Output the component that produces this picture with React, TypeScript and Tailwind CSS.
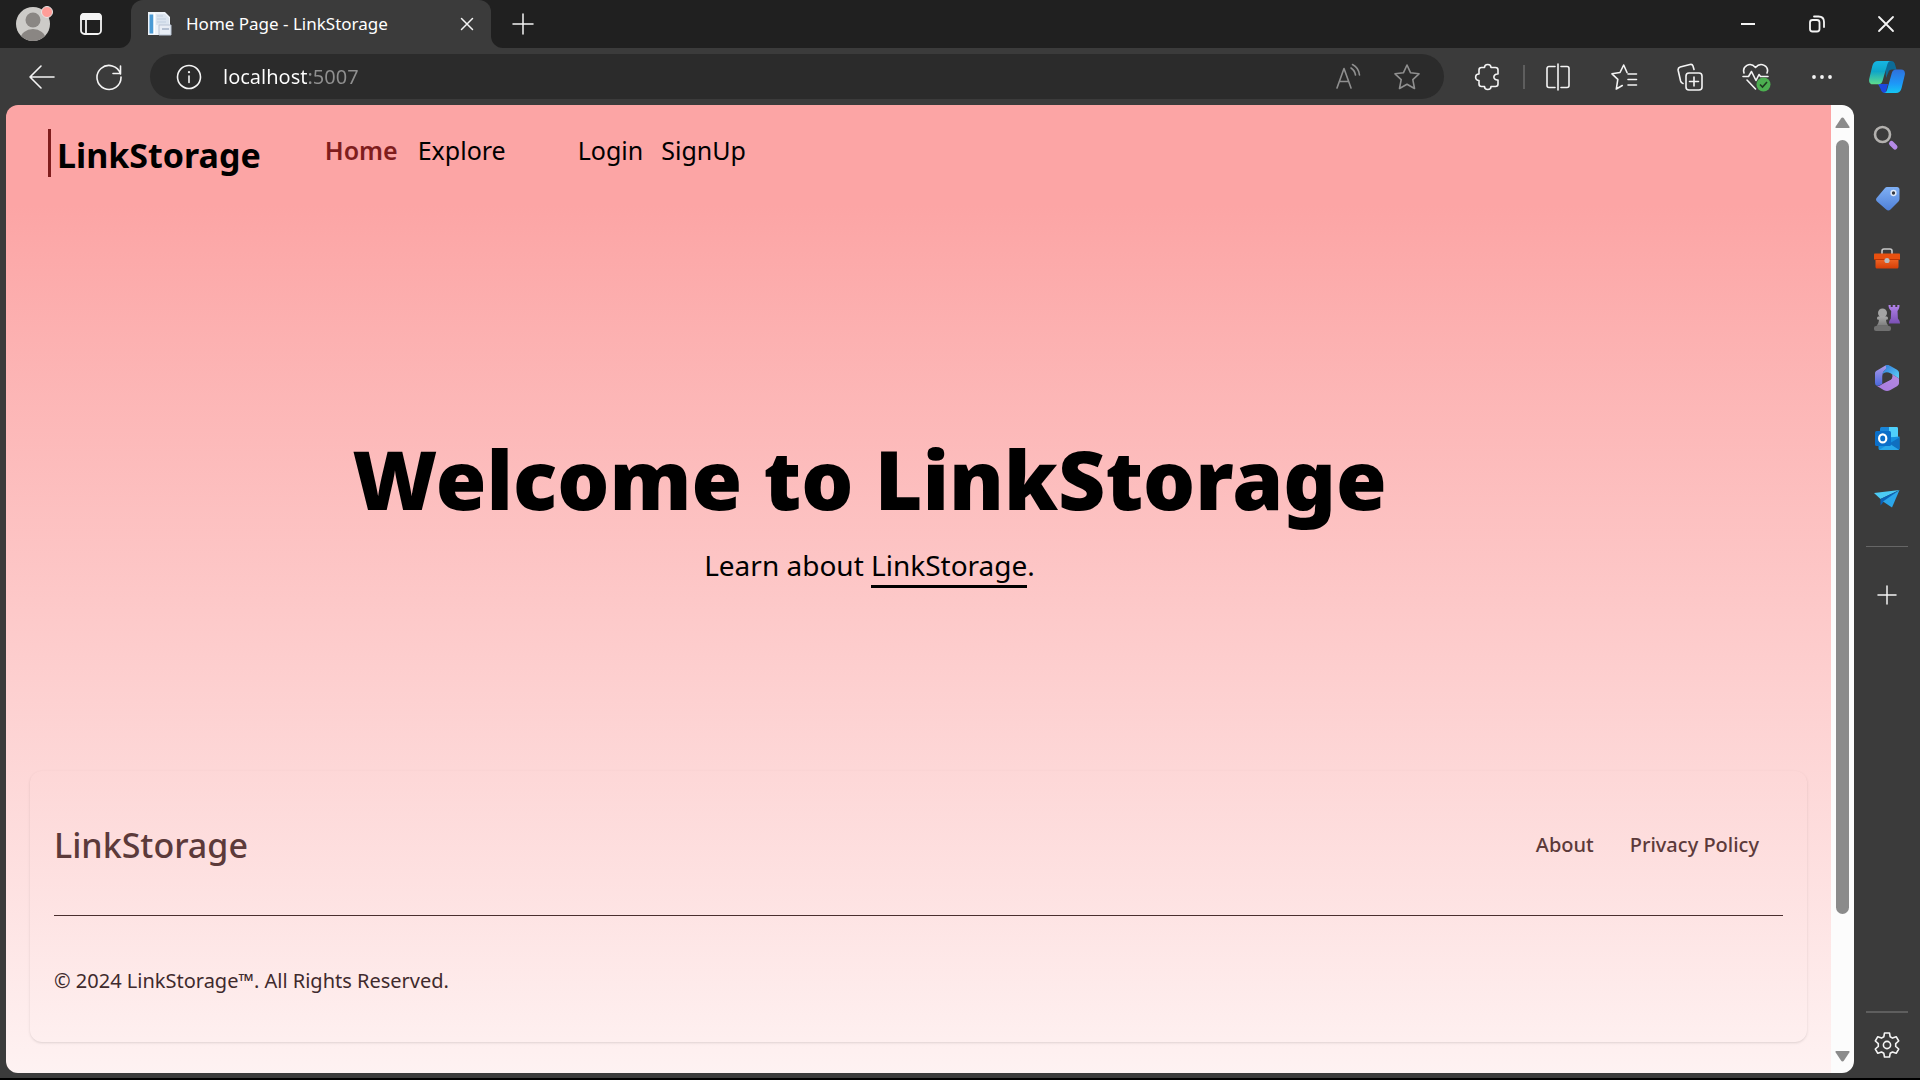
import { useState } from 'react'
import type { ReactNode } from 'react'

interface IconButtonProps {
  label: string
  className?: string
  children: ReactNode
}

function IconButton({ label, className = '', children }: IconButtonProps) {
  return (
    <button type="button" aria-label={label} className={`flex shrink-0 items-center justify-center ${className}`}>
      {children}
    </button>
  )
}

interface LineIconProps {
  size?: number
  stroke?: string
  width?: number
  children: ReactNode
}

function LineIcon({ size = 28, stroke = '#f4f4f4', width = 1.6, children }: LineIconProps) {
  return (
    <svg
      width={size}
      height={size}
      viewBox={`0 0 ${size} ${size}`}
      fill="none"
      stroke={stroke}
      strokeWidth={width}
      strokeLinecap="round"
      strokeLinejoin="round"
      aria-hidden="true"
    >
      {children}
    </svg>
  )
}

function Avatar() {
  return (
    <svg width="40" height="40" viewBox="0 0 40 40" aria-hidden="true">
      <defs>
        <clipPath id="avatar">
          <circle cx="19" cy="20" r="17" />
        </clipPath>
      </defs>
      <g clipPath="url(#avatar)">
        <rect width="40" height="40" fill="#cdcbc8" />
        <circle cx="19" cy="16" r="7.5" fill="#8a8683" />
        <ellipse cx="19" cy="35" rx="12.5" ry="10" fill="#8a8683" />
      </g>
      <circle cx="33" cy="8" r="5.5" fill="#ff9d98" stroke="#e6e6e6" />
    </svg>
  )
}

function Favicon() {
  return (
    <svg width="26" height="26" viewBox="0 0 26 26" aria-hidden="true">
      <path d="M1 1h17l5 5v18H1z" fill="#eef3f9" />
      <path d="M2.5 3.5h4v19h-4z" fill="#4a9ad4" />
      <path d="M6.5 2H8v21H6.500z" fill="#fff" />
      <path d="M9 3h9l4 4v7H9z" fill="#dbe4ef" />
      <path d="M10 5h6M10 8h9M10 11h9" stroke="#c1cfe0" />
      <path d="M12 14h12v10H12z" fill="#e8edf5" stroke="#b9c4d4" />
      <path d="M15 18h7" stroke="#a3b1c6" strokeWidth="1.5" />
    </svg>
  )
}

function CopilotLogo() {
  return (
    <svg width="36" height="32" viewBox="0 0 36 32" aria-hidden="true">
      <defs>
        <linearGradient id="cpLeft" x1="0" y1="0" x2="0" y2="1">
          <stop offset="0" stopColor="#16b6e4" />
          <stop offset="0.45" stopColor="#0fa6c8" />
          <stop offset="1" stopColor="#5fdc8c" />
        </linearGradient>
        <linearGradient id="cpRight" x1="0" y1="0" x2="0" y2="1">
          <stop offset="0" stopColor="#2f70dc" />
          <stop offset="0.6" stopColor="#1d98f8" />
          <stop offset="1" stopColor="#14c6f2" />
        </linearGradient>
      </defs>
      <path d="M16 0h6c2.500 0 3.600 1.500 4.200 4l1.300 4.500H23c-2 0-3 .8-3.700 3L17 17z" fill="#0c6c98" />
      <path d="M9 23h10l-1.500 5.500C17 30.500 17.500 31.500 19 32h-3c-2.500 0-3.600-1.500-4.400-4z" fill="#1c48dc" />
      <path d="M9 0h13c-2 0-3 1-3.700 3.500L13.500 20c-.7 2.200-2 3.300-4 3.300H4C.8 23.300-.5 21 .3 17.500L3.300 5C4.200 1.500 6 0 9 0z" fill="url(#cpLeft)" />
      <path d="M27 32H14.500c2 0 3-1 3.700-3.500L22.800 12c.7-2.300 2-3.500 4-3.500H32c3.200 0 4.500 2.300 3.700 5.800L32.600 27c-.9 3.500-2.600 5-5.600 5z" fill="url(#cpRight)" />
    </svg>
  )
}

const toolbarItems = [
  {
    label: 'Split screen',
    icon: (
      <LineIcon>
        <path d="M14 1v26M11 3.500H5A2 2 0 0 0 3 5.500v17a2 2 0 0 0 2 2h6M17 3.500h6a2 2 0 0 1 2 2v17a2 2 0 0 1-2 2h-6" />
      </LineIcon>
    ),
  },
  {
    label: 'Favorites',
    icon: (
      <LineIcon>
        <path d="M17 9.500 13.700 2 10 9.500l-8 1.300 5.800 5.500-1.500 9.700 6-3.500M18 11h8.500M18 16.500h8.500M18 22h8.500" />
      </LineIcon>
    ),
  },
  {
    label: 'Collections',
    icon: (
      <LineIcon>
        <rect x="10" y="10" width="16" height="17" rx="3" />
        <path d="M18 14v9M13.500 18.500h9M7 20.500c-1.500-.3-2-1-2.400-2.500L2.200 7.500c-.4-2 .2-3 2-3.500L14 1.500c1.500-.4 2.500 0 3 1.500l1 3.500" />
      </LineIcon>
    ),
  },
  {
    label: 'Browser essentials',
    icon: (
      <svg width="30" height="30" viewBox="0 0 30 30" fill="none" aria-hidden="true">
        <path
          d="M3 11C1 4.500 9-1 14.500 5.500 20-1 28.500 4.500 26 11M2 14.500h5.500l3-5 4.500 9 3-6 1.500 2H27M6 18l8.500 9"
          stroke="#f4f4f4"
          strokeWidth="1.6"
          strokeLinecap="round"
          strokeLinejoin="round"
        />
        <circle cx="22.5" cy="22.5" r="7" fill="#4caf50" />
        <path d="m19 22.500 2.500 2.500 4.500-5" stroke="#1f3a20" strokeWidth="1.6" />
      </svg>
    ),
  },
  {
    label: 'Settings and more',
    icon: (
      <svg width="22" height="6" viewBox="0 0 22 6" fill="#f4f4f4" aria-hidden="true">
        <circle cx="3" cy="3" r="1.9" />
        <circle cx="11" cy="3" r="1.9" />
        <circle cx="19" cy="3" r="1.9" />
      </svg>
    ),
  },
]

const sidebarItems = [
  {
    label: 'Search',
    icon: (
      <svg width="28" height="28" viewBox="0 0 28 28" fill="none" aria-hidden="true">
        <circle cx="9.5" cy="10.5" r="7.5" stroke="#b3b1ae" strokeWidth="2.6" />
        <path d="m18.500 19.500 3.500 3.500" stroke="#b48ae6" strokeWidth="5" strokeLinecap="round" />
      </svg>
    ),
  },
  {
    label: 'Shopping',
    icon: (
      <svg width="28" height="28" viewBox="0 0 28 28" aria-hidden="true">
        <defs>
          <linearGradient id="tag" x1="0" y1="0" x2="0" y2="1">
            <stop offset="0" stopColor="#7fb0f5" />
            <stop offset="1" stopColor="#4f80d8" />
          </linearGradient>
        </defs>
        <path d="M14 3h10c1.500 0 2.500 1 2.500 2.500V15c0 1-.3 1.800-1 2.500l-8 8c-1.300 1.300-3 1.300-4.300 0L4 17.500c-1.300-1.300-1.300-2.500 0-4l8-9.500c.6-.7 1.200-1 2-1z" fill="url(#tag)" />
        <circle cx="20.5" cy="9" r="2.4" fill="#35383f" stroke="#dfe9f8" strokeWidth="1.5" />
      </svg>
    ),
  },
  {
    label: 'Tools',
    icon: (
      <svg width="28" height="28" viewBox="0 0 28 28" aria-hidden="true">
        <defs>
          <linearGradient id="box" x1="0" y1="0" x2="0" y2="1">
            <stop offset="0" stopColor="#f26a2a" />
            <stop offset="1" stopColor="#d63e06" />
          </linearGradient>
        </defs>
        <path d="M9 10V7c0-1.200.8-2 2-2h6c1.200 0 2 .8 2 2v3" fill="none" stroke="#c9c9c9" strokeWidth="1.6" />
        <path d="M2.500 14h23v9c0 .8-.6 1.500-1.500 1.500H4c-.9 0-1.500-.7-1.500-1.500z" fill="url(#box)" />
        <path d="M2 9.500h24c.6 0 1 .4 1 1V15H1v-4.500c0-.6.4-1 1-1z" fill="#e8500f" />
        <path d="M1 15.500h26" stroke="#b93404" />
        <circle cx="14" cy="16.5" r="2.6" fill="#b9bcc0" />
      </svg>
    ),
  },
  {
    label: 'Games',
    icon: (
      <svg width="28" height="28" viewBox="0 0 28 28" aria-hidden="true">
        <defs>
          <linearGradient id="pawn" x1="0" y1="0" x2="0" y2="1">
            <stop offset="0" stopColor="#a9a9a9" />
            <stop offset="1" stopColor="#7c7c7c" />
          </linearGradient>
          <linearGradient id="rook" x1="0" y1="0" x2="0" y2="1">
            <stop offset="0" stopColor="#b283ea" />
            <stop offset="1" stopColor="#7a50b4" />
          </linearGradient>
        </defs>
        <path d="M15.500 1h2.200v2h2V1h2.600v2h2V1h2.200c0 3-.7 4.500-2 6l.4 7.500c1.300 1.500 2 3 2.100 5H16c0-2 .6-3.500 1.800-5l.4-7.500c-1.700-1.500-2.700-3-2.700-6z" fill="url(#rook)" />
        <circle cx="9.5" cy="9" r="4.5" fill="#a4a4a4" />
        <path d="M4 14.200c0-1 .7-1.700 1.700-1.700h7.600c1 0 1.700.7 1.700 1.700s-.7 1.600-1.700 1.600H13c.3 2.500 1 4.500 2.500 6h-12C5 20.300 5.700 18.300 6 15.800h-.3C4.700 15.800 4 15.200 4 14.200z" fill="url(#pawn)" />
        <rect x="1" y="22" width="17" height="5" rx="2" fill="#707070" />
      </svg>
    ),
  },
  {
    label: 'Microsoft 365',
    icon: (
      <svg width="28" height="28" viewBox="0 0 28 28" aria-hidden="true">
        <defs>
          <linearGradient id="m365a" x1="0" y1="0" x2="0" y2="1">
            <stop offset="0" stopColor="#b09ae8" />
            <stop offset="1" stopColor="#4a68dc" />
          </linearGradient>
          <linearGradient id="m365b" x1="0" y1="0" x2="1" y2="1">
            <stop offset="0" stopColor="#2f78d8" />
            <stop offset="1" stopColor="#5cd0f8" />
          </linearGradient>
          <linearGradient id="m365c" x1="0" y1="1" x2="1" y2="0">
            <stop offset="0" stopColor="#a77ae0" />
            <stop offset="1" stopColor="#b48ae0" />
          </linearGradient>
        </defs>
        <path d="M12 1.800 4 6.500C2.700 7.200 2 8.200 2 9.500v9c0 2 .8 3.300 2.300 3.300s3-.8 5.200-2.300V11c0-2 .6-3.500 2-4.600l4-3.200V1C14.300.7 13 1.100 12 1.800z" fill="url(#m365a)" />
        <path d="M12.500 1.500c1.500-.8 3-.6 4.500.2l7 4c1.300.8 2 1.800 2 3.300v5.500L17.500 9.300C15 8 13 8 11 9c-.8.500-1.200 1-1.500 2 0-2 .6-3.500 2-4.600 2-1.400 2-3.400 1-4.900z" fill="url(#m365b)" />
        <path d="M26 14.500V19c0 1.400-.7 2.400-2 3.200l-7 4c-2 1.100-4 1.100-6 0L4 22c2 .3 3.500-.7 5.500-2l7.500-4c1.500-1 2.500-2.200 2.500-3.700 0-1-.3-1.600-.8-2.200z" fill="url(#m365c)" />
        <path d="M9.500 12.500c0-2.500 3-4.500 6-3s4.500 4 2.500 6l-8.500 4z" fill="#3b3b3b" />
      </svg>
    ),
  },
  {
    label: 'Outlook',
    icon: (
      <svg width="28" height="28" viewBox="0 0 28 28" aria-hidden="true">
        <rect x="7" y="3" width="18" height="18" rx="1.5" fill="#1a86d9" />
        <path d="M16 3h7.500c.8 0 1.500.7 1.500 1.500v9h-9z" fill="#4fd0fb" />
        <path d="M5.500 13.500h11l10-1v12c0 .9-.6 1.500-1.500 1.500H7c-.9 0-1.500-.6-1.500-1.500z" fill="#1490df" />
        <path d="m26.500 13.500-11 6.500L26 25.500c.4-.3.500-.7.500-1z" fill="#0f6fc0" />
        <path d="M6 26h20l-9.500-6.500z" fill="#28a8ea" />
        <rect x="2" y="7" width="16" height="15" rx="1.5" fill="#0b6fc9" />
        <ellipse cx="9.7" cy="14.4" rx="3.6" ry="4" fill="none" stroke="#fff" strokeWidth="2.2" />
      </svg>
    ),
  },
  {
    label: 'Drop',
    icon: (
      <svg width="28" height="28" viewBox="0 0 28 28" aria-hidden="true">
        <path d="M26.500 6 1 9l6.500 6z" fill="#4ccbf5" />
        <path d="M26.500 6 7.500 15v6.500l3-3.500z" fill="#0b62b8" />
        <path d="M26.500 6 10 17.500 19 23.500z" fill="#2ba6ea" />
      </svg>
    ),
  },
]

function TitleBar() {
  return (
    <div className="flex h-12 shrink-0 bg-[#202020] text-white">
      <IconButton label="Profile" className="ml-[9px] w-[50px]">
        <Avatar />
      </IconButton>
      <IconButton label="Workspaces" className="ml-1 w-[55px]">
        <svg width="24" height="24" viewBox="0 0 24 24" fill="none" stroke="#f4f4f4" strokeWidth="1.8" aria-hidden="true">
          <rect x="2" y="2" width="20" height="20" rx="3.5" />
          <path d="M7 7v14" />
          <path d="M2 7V5c0-2 1-3 3-3h14c2 0 3 1 3 3v2z" fill="#f4f4f4" />
        </svg>
      </IconButton>
      <div className="bg-[#3b3b3b]">
        <div className="h-12 w-[13px] rounded-br-xl bg-[#202020]" />
      </div>
      <div className="bg-[#202020]">
        <div className="flex h-12 w-[360px] items-center rounded-t-xl bg-[#3b3b3b] pr-1 pl-4">
          <Favicon />
          <span className="ml-[13px] flex-1 text-[17px]">Home Page - LinkStorage</span>
          <IconButton label="Close tab" className="size-10">
            <LineIcon size={14} width={1.5}>
              <path d="m1.500 1.500 11 11M12.500 1.500l-11 11" />
            </LineIcon>
          </IconButton>
        </div>
      </div>
      <div className="bg-[#3b3b3b]">
        <div className="flex h-12 items-center rounded-bl-xl bg-[#202020]">
          <IconButton label="New tab" className="w-16">
            <LineIcon size={22} width={1.5}>
              <path d="M11 1v20M1 11h20" />
            </LineIcon>
          </IconButton>
        </div>
      </div>
      <div className="flex-1" />
      <IconButton label="Minimize" className="w-[69px]">
        <LineIcon size={16} width={2}>
          <path d="M1 8h14" strokeLinecap="butt" />
        </LineIcon>
      </IconButton>
      <IconButton label="Restore" className="w-[69px]">
        <LineIcon size={18} width={1.8}>
          <rect x="2" y="5" width="9.5" height="11.5" rx="2.5" />
          <path d="M6 1.500h4.500c3.500 0 5.500 2 5.500 5.500v5" />
        </LineIcon>
      </IconButton>
      <IconButton label="Close" className="w-[69px]">
        <LineIcon size={18} width={1.8}>
          <path d="m2 2 14 14M16 2 2 16" />
        </LineIcon>
      </IconButton>
    </div>
  )
}

function Toolbar() {
  const [url, setUrl] = useState('localhost:5007')

  return (
    <div className="flex h-[57px] shrink-0 items-center bg-[#3b3b3b] text-white">
      <IconButton label="Back" className="ml-[9px] h-12 w-[66px]">
        <LineIcon>
          <path d="M26 14H2M13 3 2 14l11 11" />
        </LineIcon>
      </IconButton>
      <IconButton label="Refresh" className="h-12 w-[67px]">
        <LineIcon>
          <path d="M25.500 11A12 12 0 1 0 26 14M25.500 3v7.500H18" />
        </LineIcon>
      </IconButton>
      <div className="mx-2 flex h-[45px] flex-1 items-center rounded-full bg-[#2b2b2b] pr-[7px] pl-[25px]">
        <IconButton label="View site information">
          <LineIcon>
            <circle cx="14" cy="14" r="11.5" />
            <path d="M14 13v6.500" />
            <path d="M14 9v.2" strokeWidth="2.2" />
          </LineIcon>
        </IconButton>
        {/* host in white, port dimmed */}
        <input
          type="text"
          aria-label="Address"
          value={url}
          onChange={(e) => setUrl(e.target.value)}
          className="ml-5 h-8 min-w-0 flex-1 bg-linear-to-r from-white from-[85px] to-[#8f8f8f] to-[85px] bg-clip-text text-xl text-transparent outline-none"
        />
        <IconButton label="Read aloud" className="w-[60px]">
          <LineIcon stroke="#8f8f8f">
            <path d="m4 25 7-19.500L18 25M6.500 18.500h9M18 5c2.500 1.500 4 4 4.500 7M19.500 1.500c4 2 6.500 6 7 10.500" />
          </LineIcon>
        </IconButton>
        <IconButton label="Add this page to favorites" className="w-[60px]">
          <LineIcon stroke="#8f8f8f">
            <path d="m14 2 3.600 7.800 8.400 1-6.200 5.800 1.700 8.900L14 21.200l-7.500 4.300 1.700-8.900L2 10.800l8.400-1z" />
          </LineIcon>
        </IconButton>
      </div>
      <IconButton label="Extensions" className="h-12 w-[71px]">
        <LineIcon>
          <path d="M7.500 4.500h3c0-4 6.500-4 6.500 0h4.500c1.500 0 2.500 1 2.500 2.500V11c-5.500-.5-5.500 6.500 0 6v4c0 1.500-1 2.500-2.500 2.500H17c0 4-6.500 4-6.500 0h-3C6 23.500 5 22.500 5 21v-3.500c-4.500 0-4.500-6.500 0-6.500V7c0-1.500 1-2.500 2.500-2.500z" />
        </LineIcon>
      </IconButton>
      <div className="h-6 w-[2px] bg-[#5e5e5e]" />
      {toolbarItems.map((item) => (
        <IconButton key={item.label} label={item.label} className="h-12 w-[66px]">
          {item.icon}
        </IconButton>
      ))}
      <IconButton label="Copilot" className="mr-px h-12 w-16">
        <CopilotLogo />
      </IconButton>
    </div>
  )
}

function Sidebar() {
  return (
    <aside className="flex w-[66px] shrink-0 flex-col items-center pt-[3px] pb-px">
      {sidebarItems.map((item) => (
        <IconButton key={item.label} label={item.label} className="h-[60px] w-full">
          {item.icon}
        </IconButton>
      ))}
      <div className="mt-[18px] h-px w-[42px] bg-[#666]" />
      <IconButton label="Customize" className="mt-[18px] h-[60px] w-full">
        <LineIcon size={20} width={1.5}>
          <path d="M10 1v18M1 10h18" />
        </LineIcon>
      </IconButton>
      <div className="flex-1" />
      <div className="h-[2px] w-[42px] bg-[#5e5e5e]" />
      <IconButton label="Settings" className="h-16 w-full">
        <LineIcon>
          <path d="M11.500 2h5l.7 3.800 2.300 1.300 3.700-1.400 2.500 4.300-3 2.600v2.800l3 2.600-2.500 4.300-3.700-1.300-2.300 1.300-.7 3.700h-5l-.7-3.700-2.300-1.300-3.700 1.300L2.300 18l3-2.600v-2.800l-3-2.600 2.500-4.300 3.700 1.400 2.300-1.300z" />
          <circle cx="14" cy="14" r="3.6" />
        </LineIcon>
      </IconButton>
    </aside>
  )
}

function Scrollbar() {
  return (
    <div aria-hidden="true" className="flex w-[23px] shrink-0 flex-col items-center bg-[#fcfcfc] pt-3 pb-[11px]">
      <svg width="15" height="12" viewBox="0 0 15 12" fill="#8b8b8b">
        <path d="M6 1.500c.8-1.200 2.200-1.200 3 0l5.300 8c.6 1 .2 1.500-.8 1.500h-12c-1 0-1.400-.5-.8-1.500z" />
      </svg>
      <div className="mt-[11px] flex w-[13px] flex-1 flex-col">
        <div className="h-[85%] rounded-full bg-[#8b8b8b]" />
      </div>
      <svg width="15" height="12" viewBox="0 0 15 12" fill="#8b8b8b">
        <path d="M6 10.500c.8 1.200 2.200 1.200 3 0l5.300-8c.6-1 .2-1.500-.8-1.500h-12c-1 0-1.400.5-.8 1.500z" />
      </svg>
    </div>
  )
}

function SiteHeader() {
  return (
    <header className="flex h-[100px] shrink-0 items-start bg-[#fca5a5] pt-6 pl-[42px] text-black">
      <a href="#home" className="flex h-12 items-center border-l-[3px] border-[#7f1d1d] pt-1 pl-[6px] text-[34px] font-bold">
        LinkStorage
      </a>
      <nav className="ml-16 flex h-11 items-center text-[25px]">
        <a href="#home" className="font-semibold text-[#7f1d1d]">
          Home
        </a>
        <a href="#explore" className="ml-5">
          Explore
        </a>
        <a href="#login" className="ml-[72px]">
          Login
        </a>
        <a href="#signup" className="ml-[18px]">
          SignUp
        </a>
      </nav>
    </header>
  )
}

function SiteFooter() {
  return (
    <footer className="mx-6 mb-[31px] rounded-xl px-6 shadow-sm">
      <div className="flex h-36 items-center justify-between pt-1 pr-6 text-[#5c3a3a]">
        <span className="text-[34px] font-medium">LinkStorage</span>
        <nav className="flex gap-9 text-xl font-medium">
          <a href="#about">About</a>
          <a href="#privacy">Privacy Policy</a>
        </nav>
      </div>
      <hr className="border-t border-[#4a2f2f]" />
      <p className="flex h-[126px] items-center pt-1 text-xl text-[#3f2a2d]">
        © 2024 LinkStorage™. All Rights Reserved.
      </p>
    </footer>
  )
}

function HomePage() {
  return (
    <div className="flex min-w-0 flex-1 flex-col">
      <SiteHeader />
      <div className="flex flex-1 flex-col bg-linear-to-b/srgb from-[#fca5a5] to-[#fef2f2] text-black">
        <main className="flex flex-1 flex-col items-center justify-center pt-9 pr-[98px]">
          <h1 className="text-[82px] leading-[108px] font-black">Welcome to LinkStorage</h1>
          <p className="mt-3 text-[28px] leading-[42px]">
            Learn about{' '}
            <a href="#about" className="inline-block border-b-[3px] border-black leading-10">
              LinkStorage
            </a>
            .
          </p>
        </main>
        <SiteFooter />
      </div>
    </div>
  )
}

export default function App() {
  return (
    <div className="flex h-screen flex-col border-b-2 border-black bg-[#3b3b3b] font-['Noto_Sans','Open_Sans',sans-serif]">
      <TitleBar />
      <Toolbar />
      <div className="flex min-h-0 flex-1">
        <div className="mb-[5px] ml-[6px] flex min-w-0 flex-1 overflow-hidden rounded-xl">
          <HomePage />
          <Scrollbar />
        </div>
        <Sidebar />
      </div>
    </div>
  )
}
